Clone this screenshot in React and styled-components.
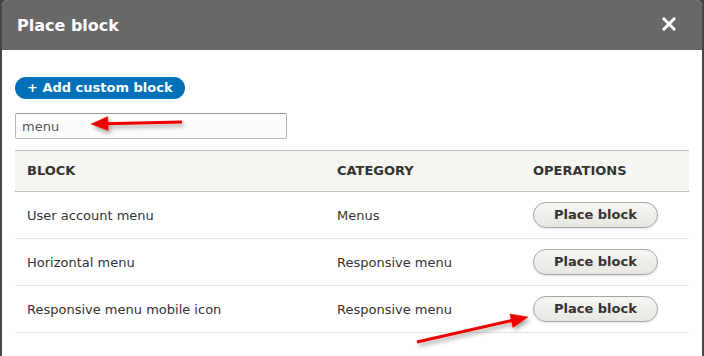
import React from "react";
import styled, { createGlobalStyle } from "styled-components";

const Global = createGlobalStyle`
  html, body { margin: 0; padding: 0; }
  body {
    background: #464646;
    font-family: "DejaVu Sans", "Liberation Sans", sans-serif;
    width: 704px;
    height: 356px;
    overflow: hidden;
  }
`;

const Page = styled.div`
  position: relative;
  width: 704px;
  height: 356px;
  padding: 0 2px;
  box-sizing: border-box;
`;

const Dialog = styled.div`
  background: #fff;
  height: 356px;
  border-radius: 6px 6px 0 0;
  overflow: hidden;
`;

const TitleBar = styled.div`
  height: 50px;
  background: #686868;
  display: flex;
  align-items: center;
  justify-content: space-between;
  padding: 0 26px 0 15px;
`;

const Title = styled.h1`
  margin: 0;
  color: #fff;
  font-size: 16px;
  font-weight: bold;
  line-height: 1;
  padding-top: 1px;
`;

const Close = styled.button`
  border: 0;
  background: none;
  padding: 0;
  width: 14px;
  height: 14px;
  display: flex;
  margin-bottom: 2px;
`;

const Body = styled.div`
  padding: 27px 13px 0;
  display: flex;
  flex-direction: column;
  align-items: flex-start;
`;

const PrimaryButton = styled.button`
  height: 22px;
  padding: 0 12px;
  border: 0;
  border-radius: 12px;
  background: #0071b8;
  color: #fff;
  font-family: inherit;
  font-weight: bold;
  font-size: 13px;
  line-height: 22px;
  margin-bottom: 14px;
`;

const Search = styled.input`
  width: 272px;
  height: 26px;
  box-sizing: border-box;
  border: 1px solid #b8b8b8;
  border-top-color: #999;
  border-radius: 2px;
  background: #fcfcfa;
  color: #595959;
  font-family: inherit;
  font-size: 13px;
  padding: 0 6px;
  margin-bottom: 11px;
  outline: none;
`;

const Table = styled.div`
  width: 674px;
  display: flex;
  flex-direction: column;
`;

const Row = styled.div`
  display: grid;
  grid-template-columns: 310px 196px 168px;
  align-items: center;
  height: ${(p) => (p.$head ? "40px" : "46px")};
  background: ${(p) => (p.$head ? "#f5f5f2" : "#fff")};
  border-top: ${(p) => (p.$head ? "1px solid #bfbfba" : "0")};
  border-bottom: 1px solid ${(p) => (p.$head ? "#bfbfba" : "#e6e4df")};
`;

const Cell = styled.div`
  padding-left: 12px;
  font-size: 13px;
  color: #333;
  font-weight: ${(p) => (p.$head ? "bold" : "normal")};
  text-transform: ${(p) => (p.$head ? "uppercase" : "none")};
  padding-bottom: ${(p) => (p.$head ? "1px" : "0")};
  display: flex;
  align-items: center;
`;

const PlaceButton = styled.button`
  height: 26px;
  padding: 0 20px;
  border: 1px solid #a6a6a6;
  border-radius: 14px;
  background: linear-gradient(to bottom, #f6f6f3, #e7e6e0);
  box-shadow: 0 1px 2px rgba(0, 0, 0, 0.12);
  color: #333;
  font-family: inherit;
  font-weight: bold;
  font-size: 13px;
  line-height: 24px;
`;

const Overlay = styled.svg`
  position: absolute;
  left: 0;
  top: 0;
  pointer-events: none;
`;

const rows = [
  ["User account menu", "Menus"],
  ["Horizontal menu", "Responsive menu"],
  ["Responsive menu mobile icon", "Responsive menu"],
];

export default function App() {
  return (
    <>
      <Global />
      <Page>
        <Dialog>
          <TitleBar>
            <Title>Place block</Title>
            <Close aria-label="Close">
              <svg width="14" height="14" viewBox="0 0 14 14">
                <path d="M2 2 L12 12 M12 2 L2 12" stroke="#fff" strokeWidth="3" strokeLinecap="square" />
              </svg>
            </Close>
          </TitleBar>
          <Body>
            <PrimaryButton>+ Add custom block</PrimaryButton>
            <Search defaultValue="menu" />
            <Table>
              <Row $head>
                <Cell $head>Block</Cell>
                <Cell $head>Category</Cell>
                <Cell $head>Operations</Cell>
              </Row>
              {rows.map(([name, cat]) => (
                <Row key={name}>
                  <Cell>{name}</Cell>
                  <Cell>{cat}</Cell>
                  <Cell>
                    <PlaceButton>Place block</PlaceButton>
                  </Cell>
                </Row>
              ))}
            </Table>
          </Body>
        </Dialog>
        <Overlay width="704" height="356" viewBox="0 0 704 356">
          <defs>
            <filter id="sh" x="-20%" y="-50%" width="140%" height="200%">
              <feDropShadow dx="2" dy="3" stdDeviation="2.2" floodColor="#000" floodOpacity="0.35" />
            </filter>
          </defs>
          <g filter="url(#sh)" fill="#ee0000" stroke="#ee0000">
            <line x1="182" y1="122" x2="105" y2="123.7" strokeWidth="3" />
            <polygon points="91,124 108.2,130.6 107.8,116.6" strokeWidth="0.5" />
            <line x1="417" y1="342" x2="514" y2="320" strokeWidth="3" />
            <polygon points="528,317 512.9,327.5 509.9,313.9" strokeWidth="0.5" />
          </g>
        </Overlay>
      </Page>
    </>
  );
}
